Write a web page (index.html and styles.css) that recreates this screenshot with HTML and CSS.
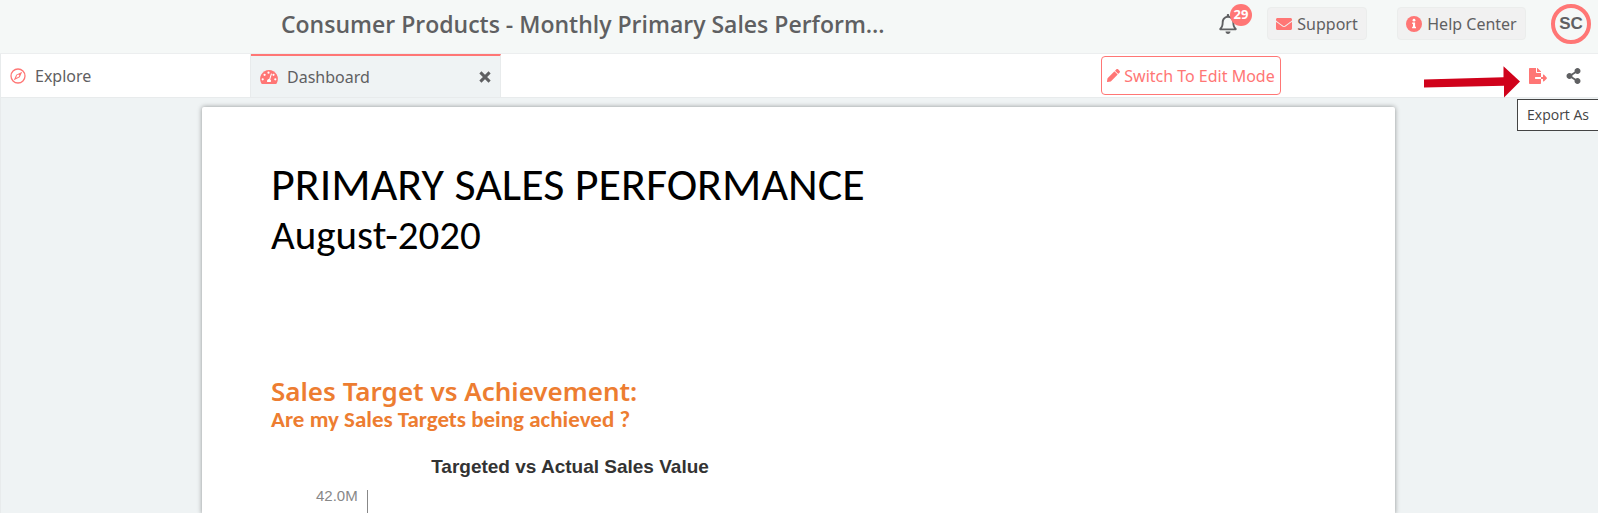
FILE: index.html
```html
<!DOCTYPE html>
<html lang="en">
<head>
<meta charset="utf-8">
<title>Consumer Products - Monthly Primary Sales Performance</title>
<link rel="stylesheet" href="styles.css">
</head>
<body>
<header class="topbar">
  <h1 class="topbar-title">Consumer Products - Monthly Primary Sales Perform…</h1>
  <div class="topbar-actions">
    <button class="bell" type="button" aria-label="Notifications">
      <svg class="bell-icon" viewBox="0 0 448 512" aria-hidden="true"><path fill="currentColor" d="M439.39 362.29c-19.32-20.76-55.47-51.99-55.47-154.29 0-77.7-54.48-139.9-127.94-155.16V32c0-17.67-14.32-32-31.98-32s-31.98 14.33-31.98 32v20.84C118.56 68.1 64.08 130.3 64.08 208c0 102.3-36.15 133.53-55.47 154.29-6 6.45-8.66 14.16-8.61 21.71.11 16.4 12.98 32 32.1 32h383.8c19.12 0 32-15.6 32.1-32 .05-7.55-2.61-15.27-8.61-21.71zM67.53 368c21.22-27.97 44.42-74.33 44.53-159.42 0-.2-.06-.38-.06-.58 0-61.86 50.14-112 112-112s112 50.14 112 112c0 .2-.06.38-.06.58.11 85.1 23.31 131.46 44.53 159.42H67.53zM224 512c35.32 0 63.97-28.65 63.97-64H160.03c0 35.35 28.65 64 63.97 64z"/></svg>
      <span class="badge">29</span>
    </button>
    <button class="soft-button" type="button">
      <svg class="icon-16" viewBox="0 0 512 512" aria-hidden="true"><path fill="currentColor" d="M502.3 190.8c3.9-3.1 9.7-.2 9.7 4.7V400c0 26.5-21.5 48-48 48H48c-26.5 0-48-21.5-48-48V195.6c0-5 5.7-7.8 9.7-4.7 22.4 17.4 52.1 39.5 154.1 113.6 21.1 15.4 56.7 47.8 92.2 47.6 35.7.3 72-32.8 92.3-47.6 102-74.1 131.6-96.3 154-113.7zM256 320c23.2.4 56.6-29.2 73.4-41.4 132.7-96.3 142.8-104.7 173.4-128.7 5.8-4.5 9.2-11.5 9.2-18.9v-19c0-26.5-21.5-48-48-48H48c-26.5 0-48 21.5-48 48v19c0 7.4 3.4 14.3 9.2 18.9 30.6 23.9 40.7 32.4 173.4 128.7 16.8 12.2 50.2 41.8 73.4 41.4z"/></svg>
      Support
    </button>
    <button class="soft-button help" type="button">
      <svg class="icon-16" viewBox="0 0 16 16" aria-hidden="true"><circle cx="8" cy="8" r="8" fill="currentColor"/><circle cx="8" cy="4.2" r="1.4" fill="#fff"/><path fill="#fff" d="M6.2 6.6h2.9v4.2h.9v1.5H6.1v-1.5H7V8.1h-.8z"/></svg>
      Help Center
    </button>
    <button class="avatar" type="button">SC</button>
  </div>
</header>

<nav class="tabbar">
  <a class="tab" href="#explore">
    <svg class="icon-16" viewBox="0 0 16 16" aria-hidden="true"><circle cx="8" cy="8" r="7" fill="none" stroke="currentColor" stroke-width="1.3"/><path fill="currentColor" fill-rule="evenodd" d="M12.2 3.7 9.8 9.3 3.8 12.3 6.2 6.7zM7 7.3l-.9 2.7 2.9-1.4.3-1.4-1-.6z"/></svg>
    <span>Explore</span>
  </a>
  <div class="tab tab-active">
    <svg class="gauge" viewBox="0 0 18 14" aria-hidden="true"><path fill="currentColor" d="M9 0a9 9 0 0 0-7.7 13.5c.2.3.5.5.9.5h13.6c.4 0 .7-.2.9-.5A9 9 0 0 0 9 0z"/><g fill="#fff"><circle cx="2.7" cy="9.3" r="1.1"/><circle cx="4.6" cy="4.8" r="1.1"/><circle cx="8.5" cy="2.7" r="1.1"/><circle cx="13.5" cy="4.8" r="1.1"/><circle cx="15.3" cy="9.3" r="1.1"/><path d="m11 3.5 1 .3-1.8 5.7a2 2 0 0 1 .6 2.5H7.2a2 2 0 0 1 2-2.9z"/></g></svg>
    <a href="#dashboard">Dashboard</a>
    <button class="tab-close" type="button" aria-label="Close Dashboard"><svg viewBox="0 0 12 12" aria-hidden="true"><path d="m1.4 1.4 9.2 9.2m0-9.2-9.2 9.2" stroke="currentColor" stroke-width="3" fill="none"/></svg></button>
  </div>
  <div class="tools">
    <button class="edit-mode" type="button">
      <svg viewBox="0 0 512 512" aria-hidden="true"><path fill="currentColor" d="M497.9 142.1l-46.1 46.1c-4.7 4.7-12.3 4.7-17 0l-111-111c-4.7-4.7-4.7-12.3 0-17l46.1-46.1c18.7-18.7 49.1-18.7 67.9 0l60.1 60.1c18.8 18.7 18.8 49.1 0 67.9zM284.2 99.8L21.6 362.4.4 483.9c-2.9 16.4 11.4 30.6 27.8 27.8l121.5-21.3 262.6-262.6c4.7-4.7 4.7-12.3 0-17l-111-111c-4.8-4.7-12.4-4.7-17.1 0z"/></svg>
      Switch To Edit Mode
    </button>
    <svg class="arrow" viewBox="0 0 96 32" aria-hidden="true"><path fill="#d0021b" d="M0 13.4 79.5 11.2V.2L96 15.4 80 31.5V19.7L0 21.5z"/></svg>
    <button class="tool export-button" type="button" aria-label="Export As"><svg viewBox="0 0 576 512" aria-hidden="true"><path fill="currentColor" d="M384 121.9c0-6.3-2.5-12.4-7-16.9L279.1 7c-4.5-4.5-10.6-7-17-7H256v128h128zM571 308l-95.7-96.4c-10.1-10.1-27.4-3-27.4 11.3V288h-64v64h64v65.2c0 14.3 17.3 21.4 27.4 11.3L571 332c6.6-6.6 6.6-17.4 0-24zm-379 28v-32c0-8.8 7.2-16 16-16h176V160H248c-13.2 0-24-10.8-24-24V0H24C10.7 0 0 10.7 0 24v464c0 13.3 10.7 24 24 24h336c13.3 0 24-10.7 24-24V352H208c-8.8 0-16-7.2-16-16z"/></svg></button>
    <button class="tool share" type="button" aria-label="Share"><svg viewBox="0 0 448 512" aria-hidden="true"><path fill="currentColor" d="M352 320c-22.608 0-43.387 7.819-59.79 20.895l-102.486-64.054a96.551 96.551 0 0 0 0-41.683l102.486-64.054C308.613 184.181 329.392 192 352 192c53.019 0 96-42.981 96-96S405.019 0 352 0s-96 42.981-96 96c0 7.158.79 14.13 2.276 20.841L155.79 180.895C139.387 167.819 118.608 160 96 160c-53.019 0-96 42.981-96 96s42.981 96 96 96c22.608 0 43.387-7.819 59.79-20.895l102.486 64.054A96.301 96.301 0 0 0 256 416c0 53.019 42.981 96 96 96s96-42.981 96-96-42.981-96-96-96z"/></svg></button>
  </div>
  <div class="tooltip" role="tooltip">Export As</div>
</nav>

<main class="workspace">
  <article class="sheet">
    <h2 class="report-title">PRIMARY SALES PERFORMANCE</h2>
    <p class="report-date">August-2020</p>
    <section class="report-section">
      <h3 class="section-title">Sales Target vs Achievement:</h3>
      <p class="section-question">Are my Sales Targets being achieved ?</p>
      <figure class="chart">
        <figcaption class="chart-title">Targeted vs Actual Sales Value</figcaption>
        <div class="plot"><span class="tick">42.0M</span><span class="axis"></span></div>
      </figure>
    </section>
  </article>
</main>
</body>
</html>
```
FILE: styles.css
```css
* { box-sizing: border-box; }

body {
  margin: 0;
  height: 100vh;
  display: flex;
  flex-direction: column;
  overflow: hidden;
  background: #eff3f4;
  color: #5f6062;
  font: 16px/20px "Noto Sans", "Open Sans", sans-serif;
}

h1, h2, h3, p, figure { margin: 0; }
button { padding: 0; border: 0; background: none; color: inherit; font: inherit; }
svg { display: block; flex: none; }
a { color: inherit; text-decoration: none; }

.topbar {
  flex: none;
  display: flex;
  align-items: center;
  justify-content: space-between;
  height: 54px;
  padding: 0 7px 6px 281px;
  border-bottom: 1px solid #eceeef;
  background: #f5f8f7;
}
.topbar-title { font: 600 23px/32px "Open Sans", "Noto Sans", sans-serif; white-space: nowrap; }
.topbar-actions { display: flex; align-items: center; }

.bell { position: relative; margin-right: 30px; }
.bell-icon { width: 18px; height: 20px; }
.badge {
  position: absolute;
  left: 11px;
  top: -10px;
  width: 22px;
  height: 22px;
  border-radius: 50%;
  background: #ff7675;
  color: #fff;
  font-size: 13px;
  line-height: 20px;
  font-weight: 700;
}
.icon-16 { width: 16px; height: 16px; color: #ff7675; }
.soft-button {
  display: flex;
  align-items: center;
  justify-content: center;
  gap: 5px;
  width: 100px;
  height: 33px;
  border: 1px solid #ebedec;
  border-radius: 4px;
  background: #f1f1f1;
}
.help { width: 129px; margin: 0 25px 0 30px; }
.avatar {
  width: 40px;
  height: 40px;
  border: 4px solid #ff7675;
  border-radius: 50%;
  font: 700 17px/20px "Liberation Sans", Arial, sans-serif;
}

.tabbar {
  position: relative;
  flex: none;
  display: flex;
  height: 44px;
  border-bottom: 1px solid #e8ebec;
  border-left: 1px solid #e8ebec;
  background: #fff;
}
.tab {
  display: flex;
  align-items: center;
  gap: 9px;
  width: 250px;
  padding: 0 9px;
  border-right: 1px solid #e8ebec;
}
.tab-active { border-top: 2px solid #ff7675; background: #eff3f4; }
.gauge { width: 18px; height: 14px; color: #ff7675; }
.tab-close { margin-left: auto; }
.tab-close svg { width: 12px; height: 12px; }

.tools { flex: 1; display: flex; align-items: center; justify-content: flex-end; padding-right: 17px; }
.edit-mode {
  display: flex;
  align-items: center;
  justify-content: center;
  gap: 4px;
  width: 180px;
  height: 39px;
  border: 1px solid #ff7675;
  border-radius: 4px;
  color: #ff7675;
  white-space: nowrap;
}
.edit-mode svg { width: 13px; height: 13px; }
.arrow { width: 96px; height: 32px; margin: 12px 9px 0 143px; }
.tool svg { width: 18px; height: 16px; }
.export-button { color: #ff7675; }
.share { margin-left: 19px; }
.share svg { width: 15px; }
.tooltip {
  position: absolute;
  top: 45px;
  right: 0;
  padding: 5px 9px;
  border: 1px solid #444;
  border-right: 0;
  background: #fff;
  color: #444;
  font: 14px/20px "Open Sans", sans-serif;
}

.workspace { flex: 1; padding: 9px 203px 0 201px; border-left: 1px solid #e8ebec; }
.sheet {
  min-height: 100%;
  padding: 50px 69px 0;
  border-radius: 2px 2px 0 0;
  background: #fff;
  box-shadow: 0 0 5px rgba(0, 0, 0, .4);
}
.report-title { color: #000; font: 400 46px/54px Carlito, Calibri, "Open Sans", sans-serif; }
.report-date { color: #000; font: 400 41px/48px Carlito, Calibri, "Open Sans", sans-serif; }
.report-section { padding-top: 116px; color: #ed7d31; }
.section-title { font-size: 26px; line-height: 32px; font-weight: 600; }
.section-question { font: 700 23px/24px Carlito, Calibri, "Open Sans", sans-serif; }
.chart { width: 598px; padding-top: 24px; font-family: "Liberation Sans", Arial, sans-serif; }
.chart-title { color: #333; font-size: 19px; line-height: 24px; font-weight: 700; text-align: center; }
.plot { display: flex; gap: 9px; padding: 11px 0 0 45px; color: #888; font-size: 15px; line-height: 11px; }
.axis { width: 1px; height: 24px; background: #888; }
```
